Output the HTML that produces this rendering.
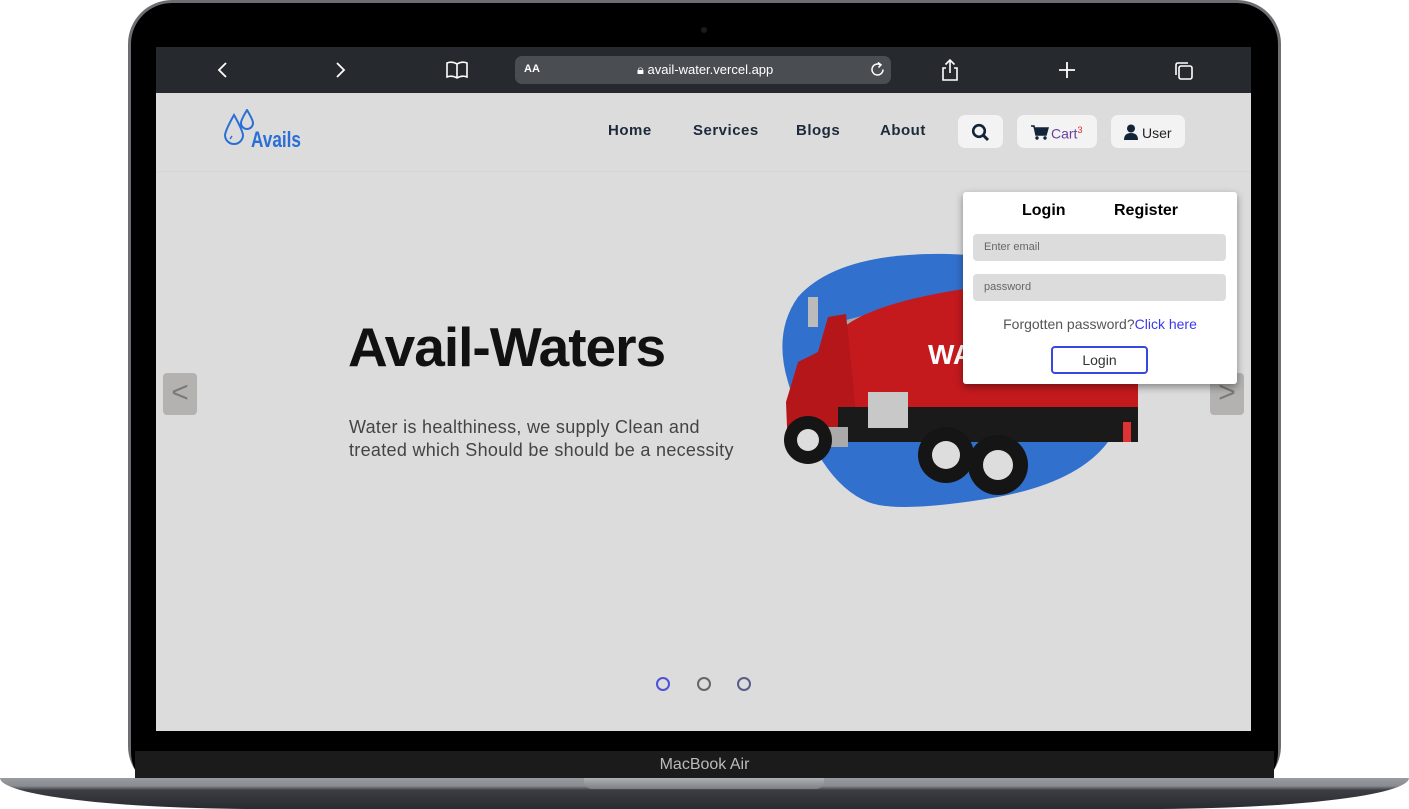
<!DOCTYPE html>
<html><head><meta charset="utf-8"><style>
*{margin:0;padding:0;box-sizing:border-box}
body{width:1409px;height:809px;background:#fff;position:relative;overflow:hidden;font-family:"Liberation Sans",sans-serif}
.frame{position:absolute;left:128px;top:0;width:1153px;height:790px;border-radius:44px;background:#6e6e72;}
.inner{position:absolute;left:131px;top:3px;width:1147px;height:790px;border-radius:41px;background:#000}
.screen{position:absolute;left:156px;top:47px;width:1095px;height:684px;background:#dcdcdc;overflow:hidden}
.bar{position:absolute;left:0;top:0;width:1095px;height:46px;background:#262a2e;color:#fff}
.url{position:absolute;left:359px;top:9px;width:376px;height:28px;border-radius:7px;background:#4a4d52;color:#fff;font-size:13px}
.chin{position:absolute;left:135px;top:751px;width:1139px;height:28px;background:#1b1b1c;color:#bbb;text-align:center;font-size:16px;line-height:28px}
.base{position:absolute;left:0;top:778px;width:1409px;height:31px;background:linear-gradient(#9a9ba0 0,#8a8b90 8px,#3d3e44 12px,#2a2b30 100%);border-radius:0 0 260px 260px/0 0 31px 31px}
.notch{position:absolute;left:584px;top:778px;width:240px;height:11px;background:linear-gradient(#b0b1b5,#7d7e83);border-radius:0 0 8px 8px}
.nav a{position:absolute;top:75px;font-size:15px;font-weight:bold;color:#1c2a3a;letter-spacing:.5px}
.btn{position:absolute;top:68px;height:33px;background:#f3f3f3;border-radius:7px;font-size:14px}
.popup{position:absolute;left:807px;top:145px;width:274px;height:192px;background:#fff;border-radius:3px;box-shadow:0 3px 8px rgba(0,0,0,.4)}
.inp{position:absolute;left:10px;width:253px;height:27px;background:#dcdcdc;border-radius:4px;font-size:11px;color:#666;padding:7px 11px}
.arr{position:absolute;top:326px;width:34px;height:42px;background:#b3b2b1;border-radius:4px;color:#7a7a7a;font-size:30px;text-align:center;line-height:40px}
.dot{position:absolute;top:630px;width:14px;height:14px;border-radius:50%;border:2.5px solid #666}
</style></head><body>
<div class="frame"></div><div class="inner"></div>
<div style="position:absolute;left:701px;top:27px;width:6px;height:6px;border-radius:50%;background:#1c1c20"></div>
<div class="screen">
 <div class="bar">
  <svg style="position:absolute;left:60px;top:14px" width="14" height="18"><path d="M10 2 L3 9 L10 16" stroke="#fff" stroke-width="1.8" fill="none"/></svg>
  <svg style="position:absolute;left:177px;top:14px" width="14" height="18"><path d="M4 2 L11 9 L4 16" stroke="#fff" stroke-width="1.8" fill="none"/></svg>
  <svg style="position:absolute;left:289px;top:13px" width="24" height="20"><path d="M2 3 Q7 1 12 4 Q17 1 22 3 V17 Q17 15 12 18 Q7 15 2 17Z M12 4 V18" stroke="#fff" stroke-width="1.6" fill="none"/></svg>
  <div class="url"><span style="position:absolute;left:9px;top:7px;font-size:11px;font-weight:bold">AA</span>
   <span style="position:absolute;left:122px;top:6px">&#128274;&#xFE0E; avail-water.vercel.app</span>
   <svg style="position:absolute;left:354px;top:5px" width="17" height="17"><path d="M14 8.5 A5.5 5.5 0 1 1 11 3.6 M9 1.5 L12 3.8 L9.5 6.5" stroke="#fff" stroke-width="1.5" fill="none"/></svg></div>
  <svg style="position:absolute;left:784px;top:11px" width="20" height="24"><path d="M10 2 V15 M5.5 6.5 L10 2 L14.5 6.5 M6 10 H3 V22 H17 V10 H14" stroke="#fff" stroke-width="1.6" fill="none"/></svg>
  <svg style="position:absolute;left:902px;top:14px" width="18" height="18"><path d="M9 1 V17 M1 9 H17" stroke="#fff" stroke-width="1.8"/></svg>
  <svg style="position:absolute;left:1017px;top:13px" width="22" height="22"><rect x="6" y="6" width="13" height="13" rx="2" stroke="#fff" stroke-width="1.6" fill="none"/><path d="M3 15 V5 Q3 3 5 3 H15" stroke="#fff" stroke-width="1.6" fill="none"/></svg>
 </div>
 <svg style="position:absolute;left:66px;top:62px" width="110" height="42"><path d="M12 6 Q4 20 3 26 A9 9 0 0 0 21 26 Q20 20 12 6Z M25 1 Q19 11 19 14 A6 6 0 0 0 31 14 Q31 11 25 1Z" stroke="#2a6fd6" stroke-width="2" fill="none"/><path d="M8 30 L10 27" stroke="#2a6fd6" stroke-width="1.5"/><text x="29" y="38" font-family="Liberation Sans Narrow,Liberation Sans,sans-serif" font-size="22" fill="#2a6fd6" font-weight="bold" textLength="50" lengthAdjust="spacingAndGlyphs">Avails</text></svg>
 <div class="nav"><a style="left:452px">Home</a><a style="left:537px">Services</a><a style="left:640px">Blogs</a><a style="left:724px">About</a></div>
 <div class="btn" style="left:802px;width:45px"><svg style="position:absolute;left:13px;top:8px" width="19" height="19"><circle cx="8" cy="8" r="5.8" stroke="#13243a" stroke-width="2.6" fill="none"/><path d="M12.5 12.5 L17 17" stroke="#13243a" stroke-width="3"/></svg></div>
 <div class="btn" style="left:861px;width:80px"><svg style="position:absolute;left:14px;top:10px" width="18" height="15"><path d="M0 1 H3 L5 10 H15 L17 3 H4" fill="#13243a" stroke="#13243a" stroke-width="1.5"/><circle cx="6" cy="13" r="1.7" fill="#13243a"/><circle cx="14" cy="13" r="1.7" fill="#13243a"/></svg><span style="position:absolute;left:34px;top:10px;color:#6a3ea0">Cart<sup style="color:#e22;font-size:9px">3</sup></span></div>
 <div class="btn" style="left:955px;width:74px"><svg style="position:absolute;left:13px;top:9px" width="14" height="16"><circle cx="7" cy="4.5" r="4" fill="#13243a"/><path d="M0 16 Q0 9 7 9 Q14 9 14 16Z" fill="#13243a"/></svg><span style="position:absolute;left:31px;top:10px;color:#222">User</span></div>
 <div style="position:absolute;left:0;top:124px;width:1095px;height:1px;background:#d6d6d6"></div>
 <div style="position:absolute;left:192px;top:268px;font-size:55px;font-weight:bold;color:#111;letter-spacing:-1px">Avail-Waters</div>
 <div style="position:absolute;left:193px;top:369px;font-size:18px;color:#444;line-height:23px;letter-spacing:.3px">Water is healthiness, we supply Clean and<br>treated which Should be should be a necessity</div>
 <svg style="position:absolute;left:622px;top:205px" width="370" height="270">
  <path d="M20 45 Q60 0 170 2 Q260 5 300 40 Q340 120 330 190 Q300 230 220 245 Q120 262 90 250 Q40 230 10 130 Q-5 80 20 45Z" fill="#3170cc"/>
  <path d="M60 70 L200 35 L205 45 L70 80Z" fill="#a8a8a8"/>
  <path d="M60 80 Q90 50 200 35 L340 25 L360 60 L360 160 L80 175Z" fill="#c41a1e"/>
  <path d="M8 150 L20 110 L40 100 L50 65 L68 62 L80 180 L10 200Z" fill="#b5161a"/>
  <rect x="30" y="45" width="10" height="30" fill="#bbb"/>
  <text x="150" y="112" font-size="28" font-weight="bold" fill="#fff" font-family="Liberation Sans">WA</text>
  <rect x="60" y="155" width="300" height="35" fill="#1a1a1a"/>
  <rect x="90" y="140" width="40" height="36" fill="#c8c8c8"/>
  <rect x="30" y="175" width="40" height="20" fill="#aaa"/>
  <circle cx="30" cy="188" r="24" fill="#151515"/><circle cx="30" cy="188" r="11" fill="#ddd"/>
  <circle cx="168" cy="203" r="28" fill="#151515"/><circle cx="168" cy="203" r="14" fill="#ddd"/>
  <circle cx="220" cy="213" r="30" fill="#151515"/><circle cx="220" cy="213" r="15" fill="#ddd"/>
  <rect x="345" y="170" width="8" height="20" fill="#d33"/>
 </svg>
 <div class="arr" style="left:7px">&lt;</div>
 <div class="arr" style="left:1054px">&gt;</div>
 <div class="popup">
  <div style="position:absolute;left:59px;top:10px;font-size:16px;font-weight:bold">Login</div>
  <div style="position:absolute;left:151px;top:10px;font-size:16px;font-weight:bold">Register</div>
  <div class="inp" style="top:42px">Enter email</div>
  <div class="inp" style="top:82px">password</div>
  <div style="position:absolute;left:0;width:274px;top:124px;text-align:center;font-size:14px;color:#555">Forgotten password?<span style="color:#3a3ae8">Click here</span></div>
  <div style="position:absolute;left:88px;top:154px;width:97px;height:28px;border:2px solid #3a46e0;border-radius:4px;text-align:center;font-size:14px;line-height:24px;color:#333">Login</div>
 </div>
 <div class="dot" style="left:500px;border-color:#4d52d8"></div>
 <div class="dot" style="left:541px"></div>
 <div class="dot" style="left:581px;border-color:#5a5c8a"></div>
</div>
<div class="chin">MacBook Air</div>
<div class="base"></div><div class="notch"></div>
</body></html>
